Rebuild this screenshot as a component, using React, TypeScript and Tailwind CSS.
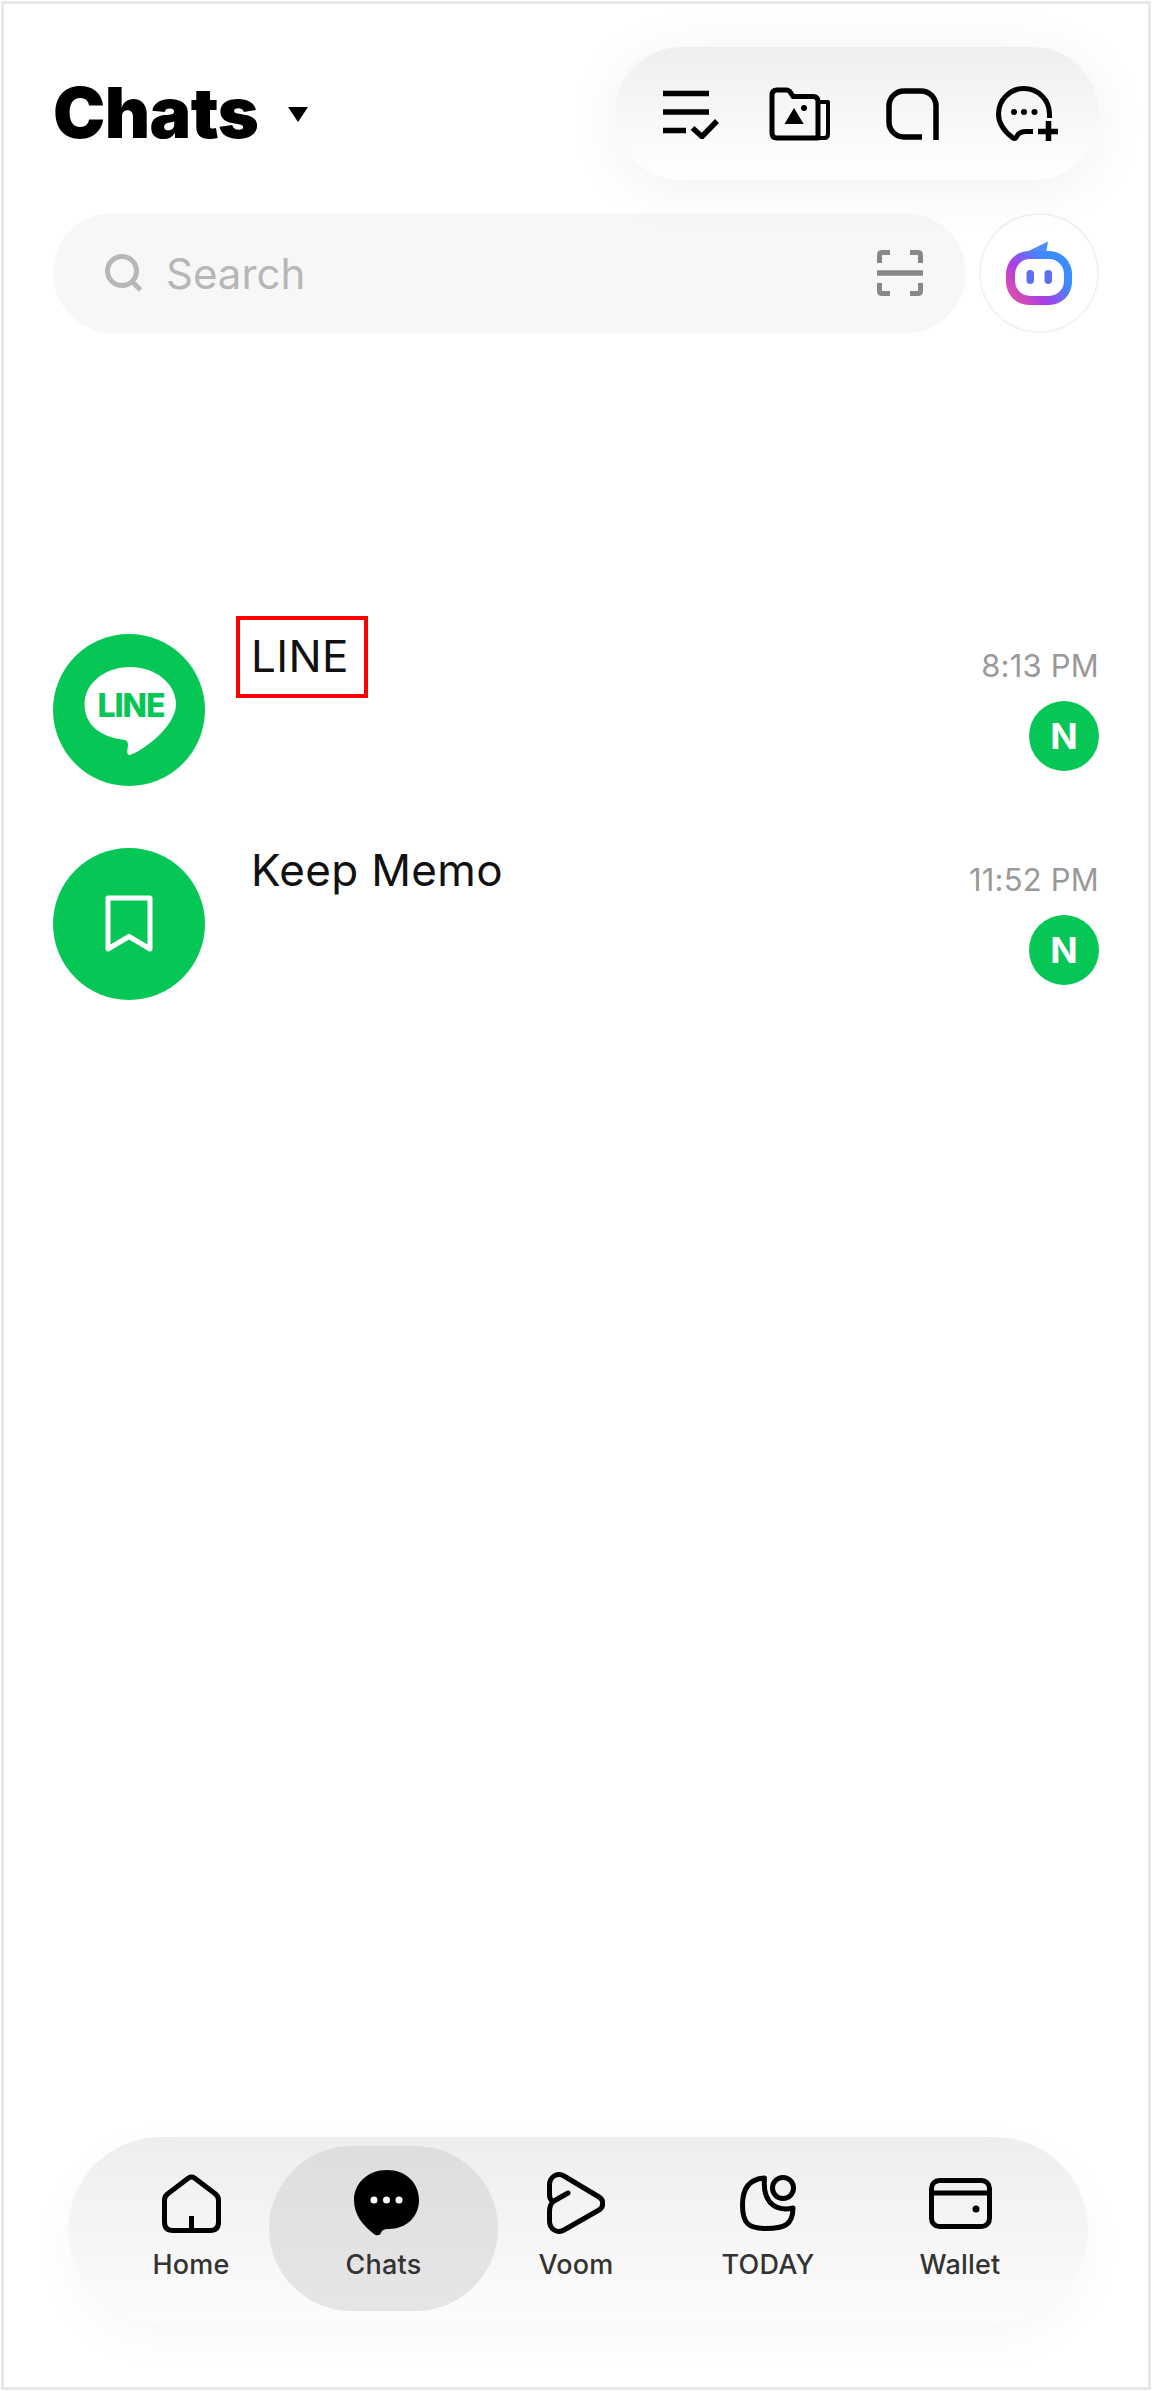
import React from "react";

const font = "font-['Inter','Liberation_Sans',sans-serif]";

function ListCheckIcon() {
  return (
    <svg width="56" height="50" viewBox="0 0 56 50" fill="none" stroke="#000" strokeWidth="5.5">
      <path d="M0 4.5H46M0 23H46M0 41.5H23" />
      <path d="M29.5 39L39 47.5L54 32" />
    </svg>
  );
}

function FolderIcon() {
  return (
    <svg width="62" height="54" viewBox="0 0 62 54" fill="none" stroke="#000" strokeWidth="5" strokeLinejoin="round">
      <path d="M3 8Q3 3 8 3H17Q20 3 21.5 5.5L24 9.5H44Q49 9.5 49 14.5V51H8Q3 51 3 46Z" />
      <path d="M49 15H59V47Q59 51 55 51H49" strokeWidth="4" />
      <path d="M25 21L34.7 37H15.5Z" fill="#000" stroke="none" />
      <circle cx="35" cy="21" r="3" fill="#000" stroke="none" />
    </svg>
  );
}

function SquareIcon() {
  return (
    <svg width="53" height="52" viewBox="0 0 53 52" fill="none" stroke="#000" strokeWidth="5.5">
      <path d="M36 49H18A15 15 0 0 1 3 34V18A15 15 0 0 1 18 3H35A15 15 0 0 1 50 18V52" />
    </svg>
  );
}

function ChatPlusIcon() {
  return (
    <svg width="63" height="56" viewBox="0 0 63 56" fill="none" stroke="#000" strokeWidth="5">
      <path d="M53.5 32V28A25.5 25.5 0 0 0 2.5 28C2.5 38 9 46 17 52Q19.500 53.500 21 50C23 46 26 45.500 30 45.500H37" strokeLinejoin="round" />
      <path d="M42 45.500H62M52.500 35V55" strokeWidth="5.500" />
      <circle cx="18" cy="26" r="3" fill="#000" stroke="none" />
      <circle cx="28" cy="26" r="3" fill="#000" stroke="none" />
      <circle cx="38.500" cy="26" r="3" fill="#000" stroke="none" />
    </svg>
  );
}

function SearchIcon() {
  return (
    <svg width="38" height="38" viewBox="0 0 38 38" fill="none" stroke="#b7b7b7" strokeWidth="5">
      <circle cx="17" cy="17" r="14.500" />
      <path d="M26.500 27L35.500 36" />
    </svg>
  );
}

function ScanIcon() {
  return (
    <svg width="46" height="46" viewBox="0 0 46 46" fill="none" stroke="#888" strokeWidth="5">
      <path d="M2.500 13V5Q2.500 2.500 5 2.500H13M33 2.500H41Q43.500 2.500 43.500 5V13M2.500 33V41Q2.500 43.500 5 43.500H13M33 43.500H41Q43.500 43.500 43.500 41V33" />
      <path d="M0 23H46" strokeWidth="5.500" />
    </svg>
  );
}

function BotLogo() {
  return (
    <svg width="66" height="64" viewBox="0 0 66 64">
      <defs>
        <linearGradient id="botRing" x1="0.1" y1="0.95" x2="0.95" y2="0.35">
          <stop offset="0" stopColor="#e64fa6" />
          <stop offset="0.4" stopColor="#a83fe6" />
          <stop offset="0.85" stopColor="#3a8cff" />
        </linearGradient>
        <linearGradient id="botTop" x1="0" y1="1" x2="1" y2="0">
          <stop offset="0" stopColor="#7d74ec" />
          <stop offset="1" stopColor="#3f93ff" />
        </linearGradient>
      </defs>
      <path d="M8 17L42 0.500L40.500 10Q42 12 46 12L30 22Z" fill="url(#botTop)" />
      <rect x="0" y="10" width="66" height="54" rx="23" fill="url(#botRing)" />
      <rect x="9" y="18" width="49" height="37" rx="15" fill="#fff" />
      <rect x="20.500" y="29" width="7.500" height="14" rx="3.750" fill="#5f6ff0" />
      <rect x="38.500" y="29" width="7.500" height="14" rx="3.750" fill="#5f6ff0" />
    </svg>
  );
}

function LineAvatar() {
  return (
    <div className="flex h-[152px] w-[152px] shrink-0 items-center justify-center rounded-full bg-[#06c755]">
      <svg width="152" height="152" viewBox="0 0 152 152">
        <path
          d="M77 33C51 33 31.500 50 31.500 70C31.500 90 46 103 72 106Q75 107 75 111C74.500 117 73 121 77 121C85 119 123 95 123 70C123 50 103 33 77 33Z"
          fill="#fff"
        />
        <text x="78" y="83" textAnchor="middle" fill="#06c755" fontFamily="Inter, sans-serif" fontWeight="800" fontSize="32" letterSpacing="-1">
          LINE
        </text>
      </svg>
    </div>
  );
}

function KeepAvatar() {
  return (
    <div className="flex h-[152px] w-[152px] shrink-0 items-center justify-center rounded-full bg-[#06c755]">
      <svg width="48" height="58" viewBox="0 0 48 58" fill="none" stroke="#fff" strokeWidth="5" strokeLinejoin="round">
        <path d="M3 3H45V54L24 41.500L3 54Z" />
      </svg>
    </div>
  );
}

function ChatRow({ name, time, avatar, boxed }: { name: string; time: string; avatar: React.ReactNode; boxed?: boolean }) {
  return (
    <div className="flex h-[152px] items-start">
      {avatar}
      <div className="ml-[46px] -mt-[5px] flex-1">
        <span className="relative inline-block text-[44px] leading-[54px] tracking-[0.35px] text-[#111111]">
          {name}
          {boxed && <span className="absolute -left-[15px] -right-[19px] -top-[13px] h-[82px] border-4 border-[#ff0000]" />}
        </span>
      </div>
      <div className="flex flex-col items-end">
        <div className="mt-[14px] text-[31px] leading-[36px] tracking-[0.2px] text-[#999999]">{time}</div>
        <div className="mt-[17px] flex h-[70px] w-[70px] items-center justify-center rounded-full bg-[#06c755] text-[36px] font-bold text-white">
          N
        </div>
      </div>
    </div>
  );
}

function HomeIcon() {
  return (
    <svg width="59" height="59" viewBox="0 0 59 59" fill="none" stroke="#000" strokeWidth="5" strokeLinejoin="round">
      <path d="M26.500 4L5.500 20Q2.500 22.500 2.500 26V48Q2.500 56.500 11 56.500H48Q56.500 56.500 56.500 48V26Q56.500 22.500 53.500 20L32.500 4Q29.500 2 26.500 4Z" />
      <path d="M29.500 56V42" />
    </svg>
  );
}

function ChatFilledIcon() {
  return (
    <svg width="65" height="66" viewBox="0 0 65 66" className="relative left-[3px]">
      <path d="M33 0C52 0 65 13 65 30C65 47 52 59 35 59C30 59 28 60 27 63C26 65.500 22 66 20 64C8 55 0 44 0 30C0 13 14 0 33 0Z" />
      <circle cx="20" cy="30" r="3.500" fill="#fff" />
      <circle cx="32.500" cy="30" r="3.500" fill="#fff" />
      <circle cx="45" cy="30" r="3.500" fill="#fff" />
    </svg>
  );
}

function VoomIcon() {
  return (
    <svg width="58" height="62" viewBox="0 0 58 62" fill="none" stroke="#000" strokeWidth="5" strokeLinecap="round">
      <path d="M21 21L7 29C3 31.500 2.500 36 2.500 40V49C2.500 57 10 62 17 58L52 38C57 35 57 28 52 25L17 4C10 0 2.500 5 2.500 13V23C2.500 26 3.500 28 6 30" />
    </svg>
  );
}

function TodayIcon() {
  return (
    <svg width="56" height="56" viewBox="0 0 56 56" fill="none" stroke="#000" strokeWidth="5" strokeLinejoin="round">
      <path d="M24.500 3C9 4 2.500 14 2.500 30C2.500 48 8 53.500 26 53.500C44 53.500 53 50 53 33C40 36 22 32 24.500 3Z" />
      <circle cx="43" cy="13" r="10.500" />
    </svg>
  );
}

function WalletIcon() {
  return (
    <svg width="63" height="51" viewBox="0 0 63 51" fill="none" stroke="#000" strokeWidth="5">
      <rect x="2.500" y="2.500" width="58" height="46" rx="8" />
      <path d="M2.500 15H60.500" />
      <circle cx="47" cy="31" r="3.500" fill="#000" stroke="none" />
    </svg>
  );
}

const tabs = [
  { label: "Home", icon: <HomeIcon /> },
  { label: "Chats", icon: <ChatFilledIcon />, active: true },
  { label: "Voom", icon: <VoomIcon /> },
  { label: "TODAY", icon: <TodayIcon /> },
  { label: "Wallet", icon: <WalletIcon /> },
];

export default function App() {
  return (
    <div className={`h-[2391px] w-[1152px] bg-white p-px ${font}`}>
      <div className="flex h-full flex-col border-[3px] border-[#e8e8e8] bg-white pl-[49px] pr-[49px]">
        <header className="flex items-start justify-between pt-[43px]">
          <div className="mt-[26px] flex items-center">
            <h1 className="text-[70px] leading-[80px] font-black tracking-[-0.6px] text-black">Chats</h1>
            <div className="ml-[30px] mt-[2px] h-0 w-0 border-x-[10.500px] border-t-[15px] border-x-transparent border-t-black" />
          </div>
          <div className="relative flex h-[133px] w-[484px] items-center rounded-full bg-linear-to-b from-[#efefef] to-white pl-[48px] shadow-[0_8px_60px_rgba(0,0,0,0.06)]">
            <div className="flex w-[106px]">
              <ListCheckIcon />
            </div>
            <div className="flex w-[117px]">
              <FolderIcon />
            </div>
            <div className="flex w-[110px]">
              <SquareIcon />
            </div>
            <ChatPlusIcon />
          </div>
        </header>

        <div className="mt-[33px] flex items-center justify-between">
          <div className="flex h-[120px] w-[913px] items-center rounded-full bg-[#f7f7f7] pl-[52px] pr-[43px]">
            <SearchIcon />
            <span className="ml-[23px] flex-1 text-[42px] text-[#b7b7b7]">Search</span>
            <ScanIcon />
          </div>
          <div className="flex h-[120px] w-[120px] items-center justify-center rounded-full border-2 border-[#f2f2f2] bg-white">
            <BotLogo />
          </div>
        </div>

        <div className="mt-[301px] flex flex-col gap-[62px]">
          <ChatRow name="LINE" time="8:13 PM" avatar={<LineAvatar />} boxed />
          <ChatRow name="Keep Memo" time="11:52 PM" avatar={<KeepAvatar />} />
        </div>

        <nav className="mb-[64px] ml-[15px] mr-[11px] mt-auto flex h-[186px] items-start justify-center rounded-full bg-linear-to-b from-[#eeeeee] to-[#fcfcfc] pr-[5px] pt-[9px] shadow-[0_16px_50px_rgba(0,0,0,0.03)]">
          {tabs.map((tab) => (
            <div
              key={tab.label}
              className={`flex h-[165px] flex-col items-center rounded-full ${
                tab.active ? "-mx-[18px] w-[229px] bg-linear-to-b from-[#dedede] to-[#e6e6e6]" : "w-[192px]"
              }`}
            >
              <div className="flex h-[96px] items-center pt-[18px]">{tab.icon}</div>
              <div className="mt-[7px] text-[27px] leading-[32px] font-medium tracking-[0.2px] text-[#333333]">{tab.label}</div>
            </div>
          ))}
        </nav>
      </div>
    </div>
  );
}
